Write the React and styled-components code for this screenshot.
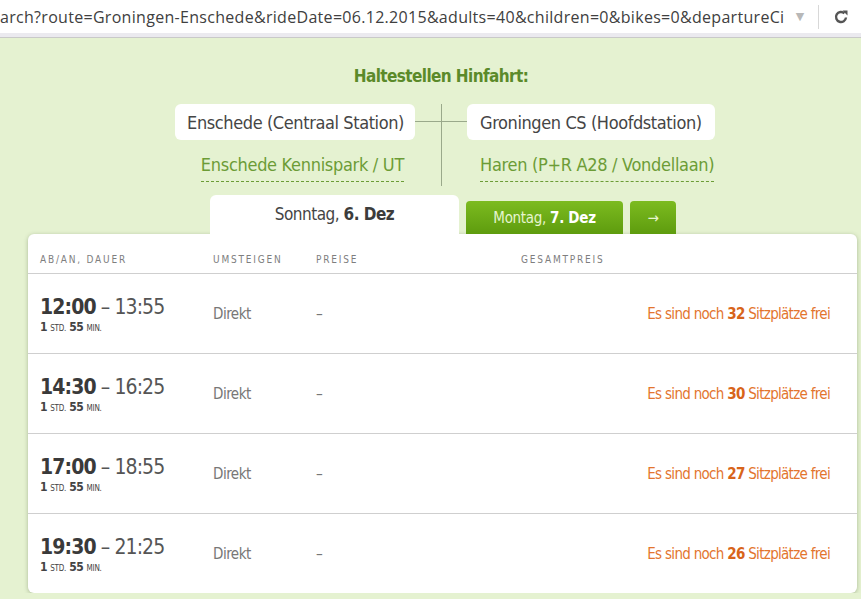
import React from 'react';
import styled, { createGlobalStyle } from 'styled-components';

const NARROW = `"Liberation Sans Narrow", "DejaVu Sans Condensed", "Liberation Sans", sans-serif`;

const GlobalStyle = createGlobalStyle`
  html, body {
    margin: 0;
    padding: 0;
    background: #e5f2d1;
    overflow: hidden;
  }
  body {
    font-family: ${NARROW};
    color: #444;
  }
`;

const AddressBar = styled.div`
  height: 33px;
  background: #fff;
  display: flex;
  align-items: center;
  border-bottom: 4px solid #ebeaef;
  box-shadow: 0 1px 0 #c9c9c9;
  overflow: hidden;
`;

const Url = styled.div`
  flex: 1;
  min-width: 0;
  white-space: nowrap;
  overflow: hidden;
  font-family: "Open Sans", "Liberation Sans", sans-serif;
  font-size: 16px;
  letter-spacing: 0.3px;
  color: #404040;
`;

const Dropdown = styled.span`
  width: 24px;
  text-align: center;
  font-size: 11px;
  color: #b8b8b8;
  font-family: "DejaVu Sans", sans-serif;
`;

const Divider = styled.span`
  width: 1px;
  height: 24px;
  margin-left: 6px;
  background: #d8d8d8;
`;

const Reload = styled.span`
  width: 28px;
  padding-left: 14px;
  display: flex;
  align-items: center;
`;

const Main = styled.main`
  padding: 28px 0 0;
`;

const Title = styled.h2`
  margin: 0;
  padding: 0 7px 0 28px;
  text-align: center;
  font-size: 17px;
  letter-spacing: -0.6px;
  line-height: 22px;
  font-weight: 700;
  color: #5b8a2a;
`;

const Stations = styled.div`
  margin-top: 17px;
  padding: 0 7px 0 28px;
  display: grid;
  grid-template-columns: 1fr 52px 1fr;
  grid-template-rows: 36px auto;
`;

const StationBox = styled.div`
  justify-self: ${({ $side }) => ($side === 'left' ? 'end' : 'start')};
  height: 36px;
  display: flex;
  align-items: center;
  padding: ${({ $side }) => ($side === 'left' ? '0 11px 0 12px' : '0 13px')};
  background: #fff;
  border-radius: 6px;
  font-size: 18px;
  letter-spacing: -0.4px;
  color: #454545;
`;

const Connector = styled.div`
  grid-column: 2;
  grid-row: 1 / 3;
  height: 82px;
  background:
    linear-gradient(#9aa98b, #9aa98b) center top / 1px 100% no-repeat,
    linear-gradient(#9aa98b, #9aa98b) left 17px / 100% 1px no-repeat;
`;

const StationLink = styled.a`
  justify-self: ${({ $side }) => ($side === 'left' ? 'end' : 'start')};
  margin: ${({ $side }) => ($side === 'left' ? '13px 11px 0 0' : '13px 0 0 13px')};
  font-size: 18px;
  letter-spacing: -0.3px;
  line-height: 24px;
  height: 24px;
  padding-bottom: 4px;
  color: #6c9c36;
  text-decoration: none;
  border-bottom: 1px dashed #6c9c36;
`;

const Tabs = styled.div`
  margin-top: 9px;
  padding-left: 210px;
  display: flex;
  align-items: flex-end;
  gap: 7px;
`;

const DayTab = styled.div`
  width: 249px;
  height: 39px;
  display: flex;
  align-items: center;
  justify-content: center;
  padding-bottom: 2px;
  box-sizing: border-box;
  background: #fff;
  border-radius: 6px 6px 0 0;
  font-size: 17px;
  letter-spacing: -0.5px;
  color: #454545;
  b { color: #3c3c3c; }
`;

const GreenTab = styled.div`
  width: ${({ $w }) => $w}px;
  height: 33px;
  display: flex;
  align-items: center;
  justify-content: center;
  background: linear-gradient(#7cbb20, #5e9c0e);
  border-radius: 4px 4px 0 0;
  font-size: 15px;
  letter-spacing: -0.3px;
  color: #e6f5cf;
  b { color: #fff; }
`;

const Card = styled.section`
  margin: 0 4px 0 28px;
  background: #fff;
  border-radius: 6px;
  box-shadow: 0 1px 4px rgba(60, 80, 40, 0.35);
`;

const Grid = styled.div`
  display: grid;
  grid-template-columns: 173px 103px 205px 1fr;
  padding: 0 27px 0 12px;
  align-items: center;
`;

const HeadRow = styled(Grid)`
  height: 38px;
  padding-top: 1px;
  border-bottom: 1px solid #cfcfcf;
  align-items: end;
`;

const HeadLabel = styled.span`
  font-family: "DejaVu Sans Condensed", "Liberation Sans Narrow", sans-serif;
  font-size: 10px;
  letter-spacing: 1.8px;
  color: #7e7e7e;
  line-height: 12px;
  padding-bottom: 7px;
`;

const Row = styled(Grid)`
  height: 79px;
  border-bottom: ${({ $last }) => ($last ? 'none' : '1px solid #cfcfcf')};
`;

const Times = styled.div`
  display: flex;
  flex-direction: column;
  padding-top: 2px;
`;

const TimeLine = styled.div`
  font-size: 21px;
  letter-spacing: -0.9px;
  line-height: 26px;
  color: #555;
  b { color: #3a3a3a; }
`;

const Duration = styled.div`
  font-size: 12px;
  letter-spacing: -0.4px;
  line-height: 15px;
  color: #444;
  small { font-size: 8px; letter-spacing: -0.2px; }
`;

const Plain = styled.span`
  font-size: 15px;
  letter-spacing: -0.5px;
  color: #777;
`;

const Seats = styled.span`
  justify-self: end;
  font-size: 15px;
  letter-spacing: -0.7px;
  color: #e3752e;
  b { color: #d8641a; }
`;

const rides = [
  { dep: '12:00', arr: '13:55', seats: 32 },
  { dep: '14:30', arr: '16:25', seats: 30 },
  { dep: '17:00', arr: '18:55', seats: 27 },
  { dep: '19:30', arr: '21:25', seats: 26 },
];

const ReloadIcon = () => (
  <svg width="16" height="16" viewBox="0 0 16 16">
    <path d="M13 8.5A5 5 0 1 1 11.4 4.3" fill="none" stroke="#555" strokeWidth="2.4" />
    <path d="M9.5 1.5h5v5z" fill="#555" />
  </svg>
);

export default function App() {
  return (
    <>
      <GlobalStyle />
      <AddressBar>
        <Url>arch?route=Groningen-Enschede&amp;rideDate=06.12.2015&amp;adults=40&amp;children=0&amp;bikes=0&amp;departureCi</Url>
        <Dropdown>▼</Dropdown>
        <Divider />
        <Reload><ReloadIcon /></Reload>
      </AddressBar>
      <Main>
        <Title>Haltestellen Hinfahrt:</Title>
        <Stations>
          <StationBox $side="left">Enschede (Centraal Station)</StationBox>
          <Connector />
          <StationBox $side="right">Groningen CS (Hoofdstation)</StationBox>
          <StationLink $side="left" href="#">Enschede Kennispark / UT</StationLink>
          <StationLink $side="right" href="#">Haren (P+R A28 / Vondellaan)</StationLink>
        </Stations>
        <Tabs>
          <DayTab>Sonntag,&nbsp;<b>6. Dez</b></DayTab>
          <GreenTab $w={157}>Montag,&nbsp;<b>7. Dez</b></GreenTab>
          <GreenTab $w={46}>→</GreenTab>
        </Tabs>
        <Card>
          <HeadRow>
            <HeadLabel>AB/AN, DAUER</HeadLabel>
            <HeadLabel>UMSTEIGEN</HeadLabel>
            <HeadLabel>PREISE</HeadLabel>
            <HeadLabel>GESAMTPREIS</HeadLabel>
          </HeadRow>
          {rides.map((r, i) => (
            <Row key={r.dep} $last={i === rides.length - 1}>
              <Times>
                <TimeLine><b>{r.dep}</b> – {r.arr}</TimeLine>
                <Duration><b>1</b> <small>STD.</small> <b>55</b> <small>MIN.</small></Duration>
              </Times>
              <Plain>Direkt</Plain>
              <Plain>–</Plain>
              <Seats>Es sind noch <b>{r.seats}</b> Sitzplätze frei</Seats>
            </Row>
          ))}
        </Card>
      </Main>
    </>
  );
}
